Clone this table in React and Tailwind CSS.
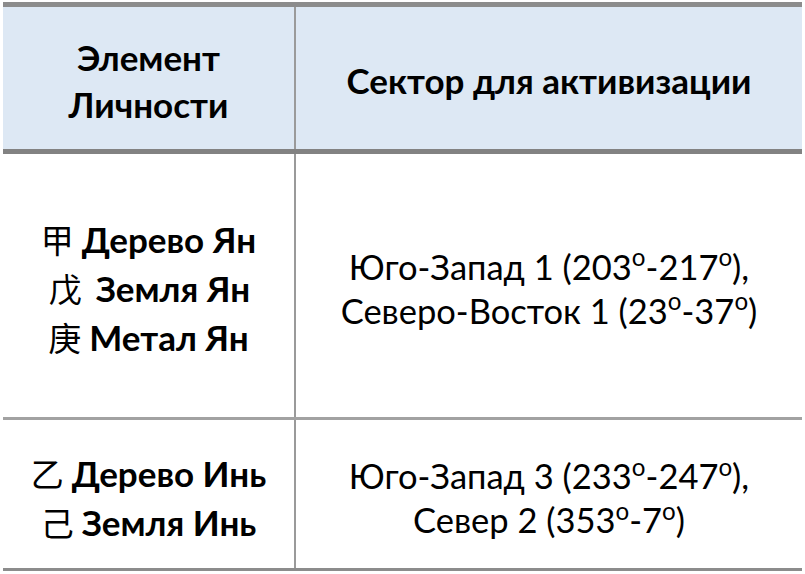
import React from "react";

const cjk = "font-['Noto_Sans_CJK_SC',sans-serif] font-normal text-[33px]";

function Deg({ children }) {
  return (
    <>
      {children}
      <sup className="text-[0.7em] top-[-0.55em]">o</sup>
    </>
  );
}

export default function App() {
  return (
    <div className="w-[805px] h-[574px] bg-white pt-[2px] pl-[3px] font-['Lato',sans-serif] text-black">
      <div className="w-[799px] border-t-[5px] border-b-[3px] border-[#8c8c8c]">
        {/* header */}
        <div className="grid grid-cols-[293px_1fr] h-[147px] bg-[#dde8f4] border-b-[5px] border-[#828282]">
          <div className="border-r-2 border-[#9a9a9a] flex flex-col items-center justify-center text-[35px] font-bold leading-[47px] pt-[6px]">
            <span>Элемент</span>
            <span>Личности</span>
          </div>
          <div className="flex items-center justify-center text-[35px] font-bold pt-[4px]">
            Сектор для активизации
          </div>
        </div>

        {/* row 1 */}
        <div className="grid grid-cols-[293px_1fr] h-[266px] border-b-[3px] border-[#a2a2a2]">
          <div className="border-r-2 border-[#9a9a9a] flex flex-col items-center justify-center text-[35px] font-bold leading-[49px] pt-[6px]">
            <span>
              <span className={cjk + " mr-[8px]"}>甲</span>Дерево Ян
            </span>
            <span className="pl-[2px]">
              <span className={cjk + " mr-[14px]"}>戊</span>Земля Ян
            </span>
            <span>
              <span className={cjk + " mr-[8px]"}>庚</span>Метал Ян
            </span>
          </div>
          <div className="flex flex-col items-center justify-center text-[34.5px] leading-[44px] pt-[6px]">
            <span>
              Юго-Запад 1 (<Deg>203</Deg>-<Deg>217</Deg>),
            </span>
            <span>
              Северо-Восток 1 (<Deg>23</Deg>-<Deg>37</Deg>)
            </span>
          </div>
        </div>

        {/* row 2 */}
        <div className="grid grid-cols-[293px_1fr] h-[148px]">
          <div className="border-r-2 border-[#9a9a9a] flex flex-col items-center justify-center text-[35px] font-bold leading-[49px] pt-[8px]">
            <span>
              <span className={cjk + " mr-[8px]"}>乙</span>Дерево Инь
            </span>
            <span>
              <span className={cjk + " mr-[8px]"}>己</span>Земля Инь
            </span>
          </div>
          <div className="flex flex-col items-center justify-center text-[34.5px] leading-[44px] pt-[8px]">
            <span>
              Юго-Запад 3 (<Deg>233</Deg>-<Deg>247</Deg>),
            </span>
            <span>
              Север 2 (<Deg>353</Deg>-<Deg>7</Deg>)
            </span>
          </div>
        </div>
      </div>
    </div>
  );
}
